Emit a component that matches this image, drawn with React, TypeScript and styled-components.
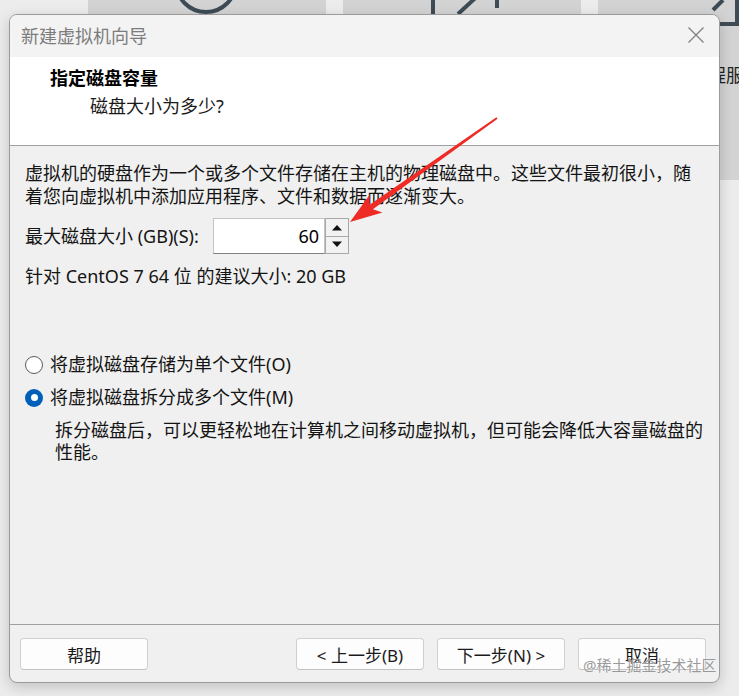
import React from "react"
import styled, { createGlobalStyle } from "styled-components"

const FONT = `"Noto Sans", "Noto Sans CJK SC", sans-serif`

const GlobalStyle = createGlobalStyle`
  html, body {
    margin: 0;
    padding: 0;
  }
  body {
    background: #ececec;
    font-family: ${FONT};
    overflow: hidden;
  }
`

const Desktop = styled.div`
  position: relative;
  width: 739px;
  height: 696px;
  overflow: hidden;
  background: #ececec;
`

// blurred VMware home tiles behind the dialog
const TileRow = styled.div`
  display: flex;
  gap: 17px;
  padding-left: 88px;
  margin-top: -70px;
`

const Tile = styled.div`
  flex: 0 0 238px;
  height: 250px;
  box-sizing: border-box;
  padding-top: 18px;
  background: #d3d3d3;
  display: flex;
  flex-direction: column;
  align-items: center;
`

const TileLabel = styled.div`
  margin-top: 36px;
  font-size: 18px;
  line-height: 22px;
  color: #222;
`

const Dialog = styled.div`
  position: absolute;
  left: 9px;
  top: 14px;
  width: 711px;
  height: 669px;
  box-sizing: border-box;
  border: 1px solid #9b9b9b;
  border-radius: 8px;
  background: #f0f0f0;
  box-shadow: 0 4px 14px rgba(0, 0, 0, 0.18);
  overflow: hidden;
  display: flex;
  flex-direction: column;
`

const TitleBar = styled.div`
  height: 42px;
  flex: 0 0 42px;
  box-sizing: border-box;
  padding: 0 14px 3px 11px;
  background: #f3f3f3;
  display: flex;
  align-items: center;
  justify-content: space-between;
  font-size: 18px;
  color: #7c7c7c;
`

const Header = styled.div`
  height: 89px;
  flex: 0 0 89px;
  box-sizing: border-box;
  padding: 10px 0 0 40px;
  background: #fff;
  border-bottom: 1px solid #a0a0a0;
`

const HeaderTitle = styled.div`
  font-size: 18px;
  line-height: 22px;
  font-weight: 700;
  color: #000;
`

const HeaderSub = styled.div`
  margin-top: 6px;
  padding-left: 40px;
  font-size: 18px;
  line-height: 22px;
  color: #1a1a1a;
`

const Body = styled.div`
  flex: 1;
  box-sizing: border-box;
  padding: 16px 0 0 15px;
  border-bottom: 1px solid #a0a0a0;
  display: flex;
  flex-direction: column;
  align-items: flex-start;
  color: #141414;
  font-size: 18px;
`

const Paragraph = styled.p`
  margin: 0;
  max-width: 675px;
  line-height: 23px;
`

const SizeRow = styled.div`
  margin-top: 10px;
  display: flex;
  align-items: center;
`

const SizeLabel = styled.label`
  width: 188px;
  line-height: 23px;
`

const SpinBox = styled.div`
  display: flex;
  height: 36px;
`

const NumberField = styled.div`
  width: 112px;
  box-sizing: border-box;
  border: 1px solid #c4c4c4;
  border-bottom-color: #808080;
  background: #fff;
  text-align: right;
  padding-right: 5px;
  line-height: 34px;
  color: #000;
`

const Spinner = styled.div`
  width: 24px;
  box-sizing: border-box;
  border: 1px solid #a8a8a8;
  background: #f2f2f2;
  display: flex;
  flex-direction: column;
`

const SpinButton = styled.div`
  flex: 1;
  display: flex;
  align-items: center;
  justify-content: center;
  &:first-child {
    border-bottom: 1px solid #a8a8a8;
  }
`

const Recommend = styled.div`
  margin-top: 11px;
  line-height: 23px;
`

const RadioGroup = styled.div`
  margin-top: 65px;
  display: flex;
  flex-direction: column;
  gap: 10px;
`

const RadioRow = styled.div`
  display: flex;
  align-items: center;
  gap: 7px;
  line-height: 23px;
`

const RadioDot = styled.span<{ $checked?: boolean }>`
  position: relative;
  width: 18px;
  height: 18px;
  box-sizing: border-box;
  border-radius: 50%;
  background: ${(p) => (p.$checked ? "#005fb8" : "#fff")};
  border: ${(p) => (p.$checked ? "none" : "1px solid #5a5a5a")};
  &::after {
    content: "";
    display: ${(p) => (p.$checked ? "block" : "none")};
    position: absolute;
    left: 5.5px;
    top: 5.5px;
    width: 7px;
    height: 7px;
    border-radius: 50%;
    background: #fff;
  }
`

const Description = styled.p`
  margin: 10px 0 0 30px;
  max-width: 655px;
  line-height: 22px;
`

const Footer = styled.div`
  flex: 0 0 57px;
  box-sizing: border-box;
  padding: 13px 13px 0 10px;
  display: flex;
  align-items: flex-start;
  justify-content: space-between;
`

const NavGroup = styled.div`
  display: flex;
  gap: 13px;
`

const Button = styled.button`
  width: 128px;
  height: 32px;
  box-sizing: border-box;
  border: 1px solid #d0d0d0;
  border-bottom-color: #c2c2c2;
  border-radius: 4px;
  background: #fdfdfd;
  font-family: ${FONT};
  font-size: 17px;
  color: #1a1a1a;
  padding: 0;
`

const Watermark = styled.div`
  position: absolute;
  left: 583px;
  top: 655px;
  font-size: 15px;
  line-height: 20px;
  color: rgba(135, 135, 135, 0.85);
  text-shadow: 0 0 1px #fff;
`

const ArrowLayer = styled.svg`
  position: absolute;
  left: 0;
  top: 0;
  pointer-events: none;
`

const ICON = "#3d4b55"

const CreateIcon = () => (
  <svg width="80" height="80" viewBox="0 0 80 80">
    <circle cx="39" cy="34" r="30" fill="none" stroke={ICON} strokeWidth="4" />
    <path d="M39 18v32M23 34h32" stroke={ICON} strokeWidth="4" />
  </svg>
)

const OpenIcon = () => (
  <svg width="80" height="80" viewBox="0 0 80 80">
    <path d="M11 14v52M36 66l26-24M75 20v40" fill="none" stroke={ICON} strokeWidth="4" />
  </svg>
)

const RemoteIcon = () => (
  <svg width="80" height="80" viewBox="0 0 80 80">
    <path d="M36 62l10-10M23 76h57M60 20v56" fill="none" stroke={ICON} strokeWidth="4" />
  </svg>
)

const CloseIcon = () => (
  <svg width="18" height="18" viewBox="0 0 18 18">
    <path d="M1.5 1.5l15 15M16.5 1.5l-15 15" stroke="#808080" strokeWidth="1.3" />
  </svg>
)

const Caret: React.FC<{ up?: boolean }> = ({ up }) => (
  <svg width="12" height="7" viewBox="0 0 12 7">
    <path d={up ? "M1 6.5L6 1l5 5.5z" : "M1 0.5L6 6l5-5.5z"} fill="#111" />
  </svg>
)

const App: React.FC = () => (
  <Desktop>
    <GlobalStyle />
    <TileRow>
      <Tile>
        <CreateIcon />
      </Tile>
      <Tile>
        <OpenIcon />
      </Tile>
      <Tile>
        <RemoteIcon />
        <TileLabel>连接远程服务器</TileLabel>
      </Tile>
    </TileRow>

    <Dialog>
      <TitleBar>
        <span>新建虚拟机向导</span>
        <CloseIcon />
      </TitleBar>
      <Header>
        <HeaderTitle>指定磁盘容量</HeaderTitle>
        <HeaderSub>磁盘大小为多少?</HeaderSub>
      </Header>
      <Body>
        <Paragraph>
          虚拟机的硬盘作为一个或多个文件存储在主机的物理磁盘中。这些文件最初很小，随着您向虚拟机中添加应用程序、文件和数据而逐渐变大。
        </Paragraph>
        <SizeRow>
          <SizeLabel>最大磁盘大小 (GB)(S):</SizeLabel>
          <SpinBox>
            <NumberField>60</NumberField>
            <Spinner>
              <SpinButton>
                <Caret up />
              </SpinButton>
              <SpinButton>
                <Caret />
              </SpinButton>
            </Spinner>
          </SpinBox>
        </SizeRow>
        <Recommend>针对 CentOS 7 64 位 的建议大小: 20 GB</Recommend>
        <RadioGroup>
          <RadioRow>
            <RadioDot />
            将虚拟磁盘存储为单个文件(O)
          </RadioRow>
          <RadioRow>
            <RadioDot $checked />
            将虚拟磁盘拆分成多个文件(M)
          </RadioRow>
        </RadioGroup>
        <Description>
          拆分磁盘后，可以更轻松地在计算机之间移动虚拟机，但可能会降低大容量磁盘的性能。
        </Description>
      </Body>
      <Footer>
        <Button>帮助</Button>
        <NavGroup>
          <Button>&lt; 上一步(B)</Button>
          <Button>下一步(N) &gt;</Button>
          <Button>取消</Button>
        </NavGroup>
      </Footer>
    </Dialog>

    <ArrowLayer width="739" height="696" viewBox="0 0 739 696">
      <polygon
        points="497.58,118.82 372.85,209.27 382.47,212.5 350,222 369.77,194.54 369.61,204.69 496.42,117.18"
        fill="#ee2b24"
      />
    </ArrowLayer>
    <Watermark>@稀土掘金技术社区</Watermark>
  </Desktop>
)

export default App
